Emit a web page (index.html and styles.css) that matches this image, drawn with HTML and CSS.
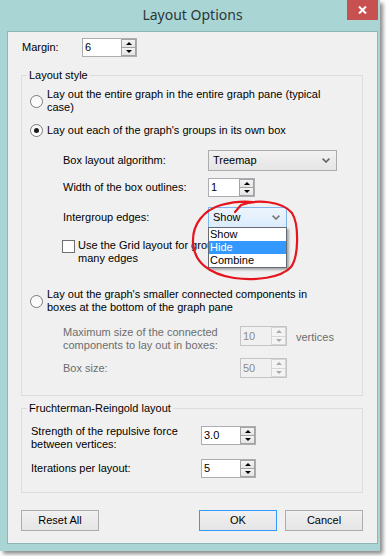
FILE: index.html
```html
<!DOCTYPE html>
<html lang="en">
<head>
  <meta charset="UTF-8">
  <title>Layout Options</title>
  <meta name="viewport" content="width=device-width, initial-scale=1.0">
  <link rel="stylesheet" href="styles.css">
</head>
<body>
  <div class="window">
    <div class="titlebar">
      <div class="title">Layout Options</div>
      <div class="close-btn">
        <svg width="9" height="8" viewBox="0 0 9 8"><path d="M1 0.5 L8 7.5 M8 0.5 L1 7.5" stroke="#fff" stroke-width="2"/></svg>
      </div>
    </div>

    <div class="client">
      <div class="row margin-row">
        <span class="lbl lbl-margin">Margin:</span>
        <div class="spin spin-55">
          <span class="spin-val">6</span>
          <span class="spin-btns"><span class="spin-up"></span><span class="spin-down"></span></span>
        </div>
      </div>

      <fieldset class="group group-style">
        <legend>Layout style</legend>

        <div class="opt opt-first">
          <span class="radio"></span>
          <span class="opt-text">Lay out the entire graph in the entire graph pane (typical case)</span>
        </div>
        <div class="opt opt-second">
          <span class="radio checked"></span>
          <span class="opt-text">Lay out each of the graph's groups in its own box</span>
        </div>

        <div class="row sub-row row-algo">
          <span class="lbl lbl-sub">Box layout algorithm:</span>
          <div class="combo combo-algo">
            <span class="combo-val">Treemap</span>
            <svg class="chev" width="8" height="5" viewBox="0 0 8 5"><path d="M0.6 0.6 L4 4 L7.4 0.6" fill="none" stroke="#666" stroke-width="1.6"/></svg>
          </div>
        </div>
        <div class="row sub-row row-width">
          <span class="lbl lbl-sub">Width of the box outlines:</span>
          <div class="spin spin-47">
            <span class="spin-val">1</span>
            <span class="spin-btns"><span class="spin-up"></span><span class="spin-down"></span></span>
          </div>
        </div>
        <div class="row sub-row row-edges">
          <span class="lbl lbl-sub">Intergroup edges:</span>
          <div class="combo combo-edges">
            <span class="combo-val">Show</span>
            <svg class="chev" width="8" height="5" viewBox="0 0 8 5"><path d="M0.6 0.6 L4 4 L7.4 0.6" fill="none" stroke="#777" stroke-width="1.6"/></svg>
            <ul class="dropdown">
              <li>Show</li>
              <li class="hl">Hide</li>
              <li>Combine</li>
            </ul>
          </div>
        </div>

        <div class="check-row">
          <span class="checkbox"></span>
          <span class="check-text">Use the Grid layout for groups that have many edges</span>
        </div>

        <div class="opt opt-third">
          <span class="radio"></span>
          <span class="opt-text">Lay out the graph's smaller connected components in boxes at the bottom of the graph pane</span>
        </div>

        <div class="row sub-row disabled row-max">
          <span class="lbl lbl-wide">Maximum size of the connected components to lay out in boxes:</span>
          <div class="spin spin-47 spin-off">
            <span class="spin-val">10</span>
            <span class="spin-btns"><span class="spin-up"></span><span class="spin-down"></span></span>
          </div>
          <span class="unit">vertices</span>
        </div>
        <div class="row sub-row disabled row-boxsize">
          <span class="lbl lbl-wide">Box size:</span>
          <div class="spin spin-47 spin-off">
            <span class="spin-val">50</span>
            <span class="spin-btns"><span class="spin-up"></span><span class="spin-down"></span></span>
          </div>
        </div>
      </fieldset>

      <fieldset class="group group-fr">
        <legend>Fruchterman-Reingold layout</legend>
        <div class="row fr-row row-strength">
          <span class="lbl lbl-fr">Strength of the repulsive force between vertices:</span>
          <div class="spin spin-55">
            <span class="spin-val">3.0</span>
            <span class="spin-btns"><span class="spin-up"></span><span class="spin-down"></span></span>
          </div>
        </div>
        <div class="row fr-row row-iter">
          <span class="lbl lbl-fr">Iterations per layout:</span>
          <div class="spin spin-55">
            <span class="spin-val">5</span>
            <span class="spin-btns"><span class="spin-up"></span><span class="spin-down"></span></span>
          </div>
        </div>
      </fieldset>

      <div class="buttons">
        <button class="btn">Reset All</button>
        <div class="btn-pair">
          <button class="btn btn-default">OK</button>
          <button class="btn">Cancel</button>
        </div>
      </div>
    </div>
  </div>

  <!-- hand-drawn red circle around the open drop-down -->
  <svg class="annotation" width="389" height="556" viewBox="0 0 389 556">
    <path d="M235,212 L241,205 C257,199 282,201 292,213 C299,224 299,256 291,267 C281,278 255,281 234,278 C209,274 194,262 193,243 C192,224 204,210 221,205 C232,202 244,201 253,202" fill="none" stroke="#e5141d" stroke-width="2.2" stroke-linecap="round" stroke-linejoin="round"/>
  </svg>
</body>
</html>
```

FILE: styles.css
```css
html, body {
  margin: 0;
  padding: 0;
  background: #fff;
}
body {
  font-family: "Liberation Sans", Arial, sans-serif;
  font-size: 11px;
  line-height: 13px;
  color: #000;
  position: relative;
  width: 389px;
  height: 556px;
  overflow: hidden;
}
.window {
  width: 380px;
  height: 551px;
  box-sizing: border-box;
  padding: 0 2px 7px 7px;
  background: #a9d5d5;
  display: flex;
  flex-direction: column;
  box-shadow: 3px 3px 4px rgba(0, 0, 0, 0.45);
}
.titlebar {
  height: 31px;
  flex-shrink: 0;
  display: grid;
  grid-template-columns: 31px 1fr 31px;
}
.title {
  grid-column: 2;
  text-align: center;
  font-family: "Noto Sans", sans-serif;
  font-size: 14px;
  line-height: 30px;
  color: #2b3838;
}
.close-btn {
  grid-column: 3;
  height: 20px;
  background: #c75050;
  display: flex;
  align-items: center;
  justify-content: center;
}
.client {
  flex: 1;
  background: #f0f0f0;
  border: 1px solid #8fb6b6;
  padding: 6px 14px 0 13px;
}

.row {
  display: flex;
  align-items: center;
}
.margin-row {
  margin-left: 1px;
}
.lbl-margin { width: 60px; }
.lbl-sub { width: 145px; }
.lbl-wide { width: 177px; }
.lbl-fr { width: 170px; }

/* spin boxes */
.spin {
  display: flex;
  box-sizing: border-box;
  height: 19px;
  background: #fff;
  border: 1px solid #abadb3;
}
.spin-55 { width: 55px; }
.spin-47 { width: 47px; }
.spin-val {
  flex: 1;
  padding-left: 2px;
  line-height: 17px;
}
.spin-btns {
  width: 15px;
  display: flex;
  flex-direction: column;
}
.spin-up, .spin-down {
  flex: 1;
  box-sizing: border-box;
  border: 1px solid #a3a3a3;
  background: linear-gradient(#f4f4f4, #e4e4e4);
  display: flex;
  align-items: center;
  justify-content: center;
}
.spin-down { border-top: 0; }
.spin-up::before {
  content: "";
  border-left: 3px solid transparent;
  border-right: 3px solid transparent;
  border-bottom: 3px solid #000;
}
.spin-down::before {
  content: "";
  border-left: 3px solid transparent;
  border-right: 3px solid transparent;
  border-top: 3px solid #000;
}
.spin-off {
  height: 20px;
  background: #f0f0f0;
  border-color: #c4c4c4;
  color: #8a8a8a;
}
.spin-off .spin-val { line-height: 18px; }
.spin-off .spin-up, .spin-off .spin-down {
  border-color: #d6d6d6;
  background: #f4f4f4;
}
.spin-off .spin-up::before { border-bottom-color: #a8a8a8; }
.spin-off .spin-down::before { border-top-color: #a8a8a8; }

/* group boxes */
.group {
  margin: 12px 0 0 0;
  padding: 0;
  width: 342px;
  box-sizing: border-box;
  min-width: 0;
  border: 1px solid #dcdcdc;
}
.group legend {
  margin-left: 5px;
  padding: 0 2px;
  line-height: 13px;
}
.group-style { padding-bottom: 17px; }
.group-fr {
  margin-top: 6px;
  padding-bottom: 14px;
}

/* radio options */
.opt {
  display: flex;
  align-items: center;
  margin-left: 8px;
}
.opt-first { margin-top: 6px; }
.opt-second { margin-top: 10px; }
.opt-third { margin-top: 23px; }
.opt-text { width: 285px; }
.radio {
  width: 13px;
  height: 13px;
  box-sizing: border-box;
  flex-shrink: 0;
  border: 1px solid #7a7a7a;
  border-radius: 50%;
  background: linear-gradient(#f6f6f6, #ffffff);
  margin-right: 4px;
  display: flex;
  align-items: center;
  justify-content: center;
}
.radio.checked::after {
  content: "";
  width: 5px;
  height: 5px;
  border-radius: 50%;
  background: #1c1c1c;
}

.sub-row { margin-left: 41px; }
.row-algo { margin-top: 13px; }
.row-width { margin-top: 7px; }
.row-edges { margin-top: 10px; }

/* combo boxes */
.combo {
  position: relative;
  box-sizing: border-box;
  height: 21px;
  display: flex;
  align-items: center;
  padding-left: 4px;
  border: 1px solid #acacac;
  background: linear-gradient(#f2f2f2, #e5e5e5);
}
.combo-algo { width: 129px; }
.combo-edges {
  width: 79px;
  border-color: #7eb4ea;
  background: linear-gradient(#ecf4fc, #dcecfc);
}
.combo-val { flex: 1; }
.chev { margin-right: 6px; }
.dropdown {
  position: absolute;
  left: -1px;
  top: 100%;
  width: 79px;
  box-sizing: border-box;
  margin: 0;
  padding: 0;
  list-style: none;
  background: #fff;
  border: 1px solid #646b75;
  box-shadow: 2px 2px 2px rgba(0, 0, 0, 0.3);
  z-index: 2;
}
.dropdown li {
  height: 13px;
  line-height: 13px;
  padding-left: 1px;
}
.dropdown .hl {
  background: #3399ff;
  color: #fff;
}

/* check box */
.check-row {
  display: flex;
  align-items: flex-start;
  margin: 11px 0 0 40px;
}
.checkbox {
  width: 13px;
  height: 13px;
  box-sizing: border-box;
  flex-shrink: 0;
  margin: 1px 3px 0 0;
  border: 1px solid #707070;
  background: #fff;
}
.check-text { width: 215px; }

/* disabled rows */
.disabled { color: #6d6d6d; }
.row-max {
  margin-top: 12px;
  align-items: flex-start;
}
.unit {
  margin: 5px 0 0 9px;
}
.row-boxsize { margin-top: 6px; }

.fr-row { margin-left: 9px; }
.row-strength {
  margin-top: 10px;
  align-items: flex-start;
}
.row-strength .spin { margin-top: 1px; }
.row-iter { margin-top: 8px; }

/* bottom buttons */
.buttons {
  width: 342px;
  margin-top: 17px;
  display: flex;
  justify-content: space-between;
}
.btn-pair {
  display: flex;
  gap: 8px;
}
.btn {
  width: 78px;
  height: 21px;
  padding: 0;
  font: inherit;
  color: #000;
  border: 1px solid #acacac;
  border-radius: 0;
  background: linear-gradient(#f0f0f0, #e5e5e5);
}
.btn-default {
  border-color: #3399ff;
}

.annotation {
  position: absolute;
  left: 0;
  top: 0;
  pointer-events: none;
  z-index: 5;
}
```
